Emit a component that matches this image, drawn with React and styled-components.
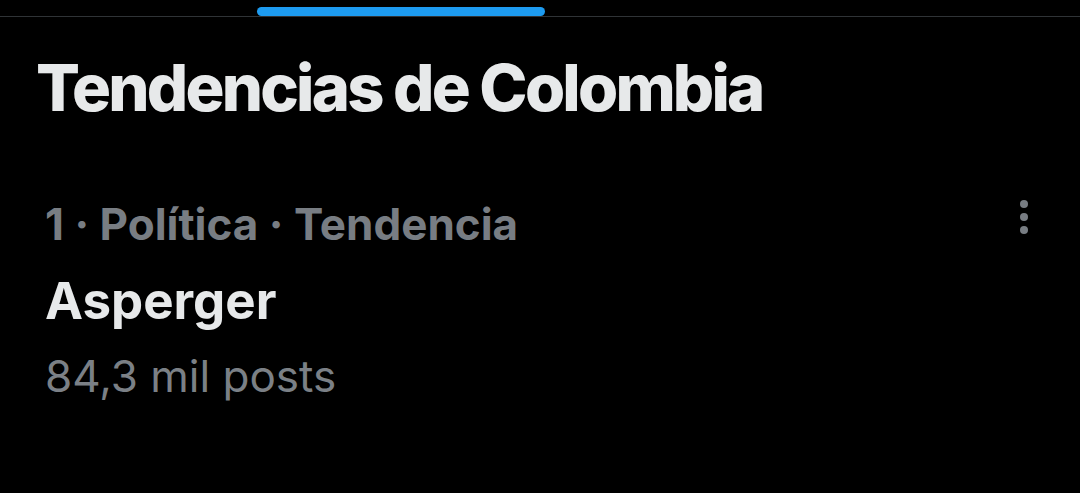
import React from "react";
import styled, { createGlobalStyle } from "styled-components";

const Global = createGlobalStyle`
  html, body { margin: 0; padding: 0; background: #000; }
  body { font-family: Inter, "Noto Sans", sans-serif; -webkit-font-smoothing: antialiased; }
`;

const Page = styled.div`
  width: 1080px;
  height: 493px;
  background: #000;
  overflow: hidden;
  display: flex;
  flex-direction: column;
`;

const TabStrip = styled.div`
  height: 16px;
  border-bottom: 1px solid #2f3336;
  display: flex;
  align-items: flex-end;
  padding-left: 257px;
`;

const TabIndicator = styled.div`
  width: 288px;
  height: 9px;
  border-radius: 5px;
  background: #1d9bf0;
`;

const Title = styled.h2`
  margin: 0;
  padding: 32px 0 0 36px;
  font-size: 65px;
  line-height: 78px;
  font-weight: 800;
  color: #e7e9ea;
  letter-spacing: -2.8px;
`;

const Trend = styled.div`
  display: flex;
  justify-content: space-between;
  padding: 69px 52px 0 45px;
`;

const TrendBody = styled.div`
  display: flex;
  flex-direction: column;
`;

const Meta = styled.div`
  font-size: 44px;
  line-height: 56px;
  font-weight: 700;
  color: #787d83;
`;

const Name = styled.div`
  margin-top: 18px;
  font-size: 51px;
  line-height: 62px;
  font-weight: 700;
  color: #e7e9ea;
`;

const Count = styled.div`
  margin-top: 16px;
  font-size: 44px;
  line-height: 56px;
  font-weight: 400;
  color: #7b8086;
`;

const More = styled.div`
  display: flex;
  flex-direction: column;
  gap: 5px;
  padding-top: 4px;
`;

const Dot = styled.span`
  width: 8px;
  height: 8px;
  border-radius: 50%;
  background: #787d83;
`;

export default function App() {
  return (
    <>
      <Global />
      <Page>
        <TabStrip>
          <TabIndicator />
        </TabStrip>
        <Title>Tendencias de Colombia</Title>
        <Trend>
          <TrendBody>
            <Meta>1 · Política · Tendencia</Meta>
            <Name>Asperger</Name>
            <Count>84,3 mil posts</Count>
          </TrendBody>
          <More>
            <Dot />
            <Dot />
            <Dot />
          </More>
        </Trend>
      </Page>
    </>
  );
}
